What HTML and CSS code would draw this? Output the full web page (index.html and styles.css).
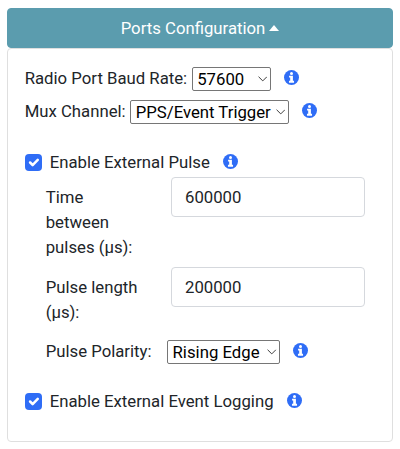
FILE: index.html
```html
<!DOCTYPE html>
<html lang="en">
<head>
<meta charset="utf-8">
<title>Ports Configuration</title>
<link rel="stylesheet" href="styles.css">
</head>
<body>
<svg class="defs" width="0" height="0" aria-hidden="true">
  <symbol id="info" viewBox="0 0 16 16">
    <circle cx="8" cy="8" r="8" fill="#2f6df6"/>
    <circle cx="8" cy="3.6" r="1.6" fill="#fff"/>
    <path d="M5.4 6.1h4.1v5.400h1.200v2H5.300v-2h1.300V8.100H5.400z" fill="#fff"/>
  </symbol>
  <symbol id="chevron" viewBox="0 0 10 6">
    <path d="M.6.6 5 5 9.400.6" fill="none" stroke="#333" stroke-width="1"/>
  </symbol>
</svg>
<button class="header" type="button"><span>Ports Configuration</span><i class="caret"></i></button>
<main class="card">
  <div class="row baud">
    <label for="baud">Radio Port Baud Rate:</label>
    <span class="select w-baud"><select id="baud"><option>57600</option></select><svg class="chevron"><use href="#chevron"/></svg></span>
    <svg class="info"><use href="#info"/></svg>
  </div>
  <div class="row mux">
    <label for="mux">Mux Channel:</label>
    <span class="select w-mux"><select id="mux"><option>PPS/Event Trigger</option></select><svg class="chevron"><use href="#chevron"/></svg></span>
    <svg class="info"><use href="#info"/></svg>
  </div>
  <div class="row pulse">
    <span class="check"><svg viewBox="0 0 20 20"><path d="m6 10 3 3 6-6"/></svg></span>
    <span>Enable External Pulse</span>
    <svg class="info"><use href="#info"/></svg>
  </div>
  <div class="field time">
    <label for="time">Time between pulses (µs):</label>
    <input id="time" type="text" value="600000">
  </div>
  <div class="field length">
    <label for="length">Pulse length (µs):</label>
    <input id="length" type="text" value="200000">
  </div>
  <div class="row polarity">
    <label for="polarity">Pulse Polarity:</label>
    <span class="select w-polarity"><select id="polarity"><option>Rising Edge</option></select><svg class="chevron"><use href="#chevron"/></svg></span>
    <svg class="info"><use href="#info"/></svg>
  </div>
  <div class="row logging">
    <span class="check"><svg viewBox="0 0 20 20"><path d="m6 10 3 3 6-6"/></svg></span>
    <span>Enable External Event Logging</span>
    <svg class="info"><use href="#info"/></svg>
  </div>
</main>
</body>
</html>
```
FILE: styles.css
```css
* { box-sizing: border-box; }
body {
  margin: 0;
  padding: 8px 7px 0;
  background: #fff;
  color: #212529;
  font: 16.74px/25px Roboto, sans-serif;
}
.defs { display: none; }
.header {
  display: flex;
  align-items: center;
  justify-content: center;
  gap: 4px;
  width: 100%;
  height: 40px;
  padding: 0;
  border: 1px solid #5b9cae;
  border-radius: 4px;
  background: #5b9cae;
  color: #fff;
  font: inherit;
}
.caret {
  border: 5px solid transparent;
  border-top: 0;
  border-bottom: 6px solid #fff;
  margin-top: -1px;
}
.card {
  height: 394px;
  padding: 17px 16.7px;
  border: 1px solid #dfdfdf;
  border-radius: 4px;
}
.row { display: flex; align-items: center; height: 25px; white-space: nowrap; }
.mux { margin-top: 8px; }
.pulse { margin-top: 26px; }
.time { margin-top: 10px; height: 75px; }
.length { margin-top: 15px; height: 50px; }
.polarity { margin: 14px 0 0 21px; }
.logging { margin-top: 25px; }
.select { position: relative; height: 24px; margin-left: 4.5px; }
.select select {
  display: block;
  appearance: none;
  width: 100%;
  height: 100%;
  padding: 0 0 0 4.5px;
  border: 1px solid #767676;
  border-radius: 2px;
  background: #fff;
  color: #000;
  font: inherit;
  line-height: 22px;
}
.w-baud { width: 79px; }
.w-mux { width: 158.5px; }
.w-polarity { width: 113px; }
.polarity .select { margin-left: 15.5px; }
.chevron {
  position: absolute;
  top: 9px;
  right: 3.5px;
  width: 9.5px;
  height: 6px;
}
.info { flex: none; width: 15px; height: 15px; margin: -3px 0 0 13px; }
.check {
  width: 17px;
  height: 17px;
  margin-right: 8px;
  border-radius: 4px;
  background: #2f6df6;
}
.check svg { display: block; width: 17px; height: 17px; }
.check path {
  fill: none;
  stroke: #fff;
  stroke-width: 3;
  stroke-linecap: round;
  stroke-linejoin: round;
}
.field { display: flex; margin-left: 21px; }
.field label { width: 125.3px; padding-right: 25px; }
.field input {
  width: 194px;
  height: 40px;
  margin-top: -8px;
  padding: 0 13px;
  border: 1px solid #d5d8dd;
  border-radius: 4px;
  background: #fff;
  color: #212529;
  font: inherit;
}
```
